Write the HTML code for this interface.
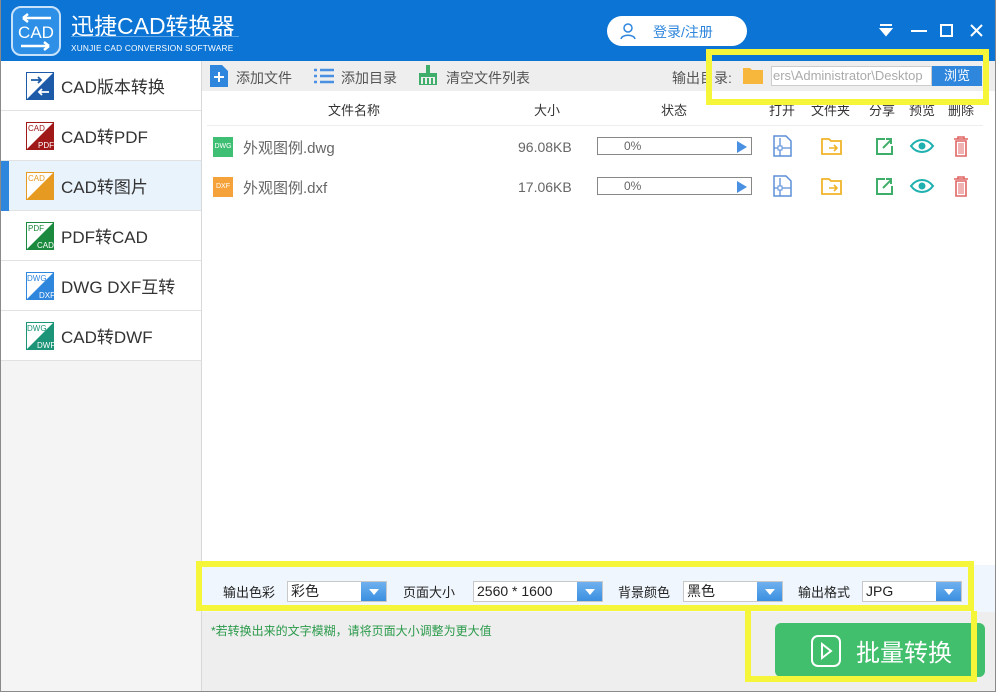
<!DOCTYPE html>
<html><head><meta charset="utf-8"><style>
*{margin:0;padding:0;box-sizing:border-box}
body{width:996px;height:692px;position:relative;overflow:hidden;background:#fff;font-family:"Liberation Sans","Noto Sans CJK SC",sans-serif;color:#333}
.a{position:absolute}
.title{left:0;top:0;width:996px;height:61px;background:#0b74d4}
.side{left:0;top:61px;width:202px;height:631px;background:#f4f4f4;border-right:1px solid #d8d8d8;border-left:1px solid #9a9a9a}
.item{position:absolute;left:1px;width:200px;height:50px;background:#fff;border-bottom:1px solid #e2e2e2;font-size:17px;color:#333}
.item span{position:absolute;left:60px;top:12px}
.item svg{position:absolute;left:25px;top:11px}
.tb{left:202px;top:61px;width:794px;height:30px;background:#eeeeee;font-size:14px;color:#555}
.hdr{font-size:13px;color:#333;top:100px}
.row{font-size:14px;color:#666}
.prog{width:155px;height:18px;border:1px solid #888;background:#fff;font-size:12px;color:#666}
.opt{left:202px;top:565px;width:794px;height:47px;background:#eff6fd}
.lbl{font-size:13px;color:#222;top:582px}
.sel{top:581px;height:21px;border:1px solid #c8c8c8;background:#fff;font-size:14px;color:#222;padding-left:3px;line-height:19px}
.sel i{position:absolute;right:0;top:0;width:25px;height:19px;background:linear-gradient(#6fb1ef,#3a8fe0)}
.sel i:after{content:"";position:absolute;left:8px;top:7px;border-left:5px solid transparent;border-right:5px solid transparent;border-top:6px solid #fff}
.yl{border:6px solid #f5f53a}
</style></head><body>
<div class="a title"></div>
<svg class="a" style="left:11px;top:6px" width="50" height="50" viewBox="0 0 50 50"><rect x="1" y="1" width="48" height="48" rx="9" fill="#2d8fe6" stroke="#c8e2fa" stroke-width="2"/><text x="25" y="32" font-size="17" fill="#fff" text-anchor="middle" font-family="Liberation Sans">CAD</text><path d="M12 12H40M12 12l5-4M12 12l5 4M10 40H38M38 40l-5-4M38 40l-5 4" stroke="#fff" stroke-width="2.5" fill="none"/></svg>
<div class="a" style="left:71px;top:7px;font-size:23px;color:#fff">迅捷CAD转换器</div>
<div class="a" style="left:71px;top:36px;width:168px;border-top:1px solid #5aa3e6"></div>
<div class="a" style="left:71px;top:43px;font-size:8.3px;color:#fff;letter-spacing:.2px">XUNJIE CAD CONVERSION SOFTWARE</div>
<div class="a" style="left:607px;top:16px;width:140px;height:30px;border-radius:15px;background:#fff"></div>
<svg class="a" style="left:619px;top:22px" width="18" height="18"><circle cx="9" cy="6" r="4" fill="none" stroke="#2f86dd" stroke-width="1.5"/><path d="M2 17c1-5 13-5 14 0" fill="none" stroke="#2f86dd" stroke-width="1.5"/></svg>
<div class="a" style="left:653px;top:22px;font-size:14px;color:#2f86dd">登录/注册</div>
<svg class="a" style="left:878px;top:22px" width="110" height="18"><path d="M2 3h12M3 7h10l-5 6z" fill="#fff" stroke="#fff" stroke-width="2"/><path d="M33 9h16" stroke="#fff" stroke-width="2"/><rect x="63" y="3" width="11" height="11" fill="none" stroke="#fff" stroke-width="2"/><path d="M93 3l11 11M104 3L93 14" stroke="#fff" stroke-width="2"/></svg>

<div class="a side"></div>
<div class="item" style="top:61px"><svg width="28" height="28"><rect x=".5" y=".5" width="27" height="27" fill="#fff" stroke="#1d5aa8"/><path d="M27 1L1 27H27z" fill="#1d5aa8"/><path d="M5 8h10M12 5l3 3-3 3" stroke="#1d5aa8" stroke-width="1.8" fill="none"/><path d="M23 20H13M16 17l-3 3 3 3" stroke="#fff" stroke-width="1.8" fill="none"/></svg><span>CAD版本转换</span></div>
<div class="item" style="top:111px"><svg width="28" height="28"><rect x=".5" y=".5" width="27" height="27" fill="#fff" stroke="#a01818"/><path d="M27 1L1 27H27z" fill="#a01818"/><text x="2" y="9" font-size="8" fill="#a01818">CAD</text><text x="12" y="26" font-size="8" fill="#fff">PDF</text></svg><span>CAD转PDF</span></div>
<div class="item" style="top:161px;background:#e9f3fc"><div class="a" style="left:0;top:0;width:8px;height:50px;background:#2f86dd"></div><svg width="28" height="28"><rect x=".5" y=".5" width="27" height="27" fill="#fff" stroke="#e69a22"/><path d="M27 1L1 27H27z" fill="#e69a22"/><text x="2" y="9" font-size="8" fill="#e69a22">CAD</text></svg><span>CAD转图片</span></div>
<div class="item" style="top:211px"><svg width="28" height="28"><rect x=".5" y=".5" width="27" height="27" fill="#fff" stroke="#1b8a3e"/><path d="M27 1L1 27H27z" fill="#1b8a3e"/><text x="2" y="9" font-size="8" fill="#1b8a3e">PDF</text><text x="11" y="26" font-size="8" fill="#fff">CAD</text></svg><span>PDF转CAD</span></div>
<div class="item" style="top:261px"><svg width="28" height="28"><rect x=".5" y=".5" width="27" height="27" fill="#fff" stroke="#2f86dd"/><path d="M27 1L1 27H27z" fill="#2f86dd"/><text x="1" y="9" font-size="8" fill="#2f86dd">DWG</text><text x="13" y="26" font-size="8" fill="#fff">DXF</text></svg><span>DWG DXF互转</span></div>
<div class="item" style="top:311px"><svg width="28" height="28"><rect x=".5" y=".5" width="27" height="27" fill="#fff" stroke="#1c9478"/><path d="M27 1L1 27H27z" fill="#1c9478"/><text x="1" y="9" font-size="8" fill="#1c9478">DWG</text><text x="11" y="26" font-size="8" fill="#fff">DWF</text></svg><span>CAD转DWF</span></div>

<div class="a tb"></div>
<svg class="a" style="left:210px;top:65px" width="18" height="22"><path d="M0 0h12l6 6v16H0z" fill="#2f86dd"/><path d="M9 7v10M4 12h10" stroke="#fff" stroke-width="2"/></svg>
<div class="a" style="left:236px;top:68px;font-size:14px;color:#555">添加文件</div>
<svg class="a" style="left:314px;top:68px" width="20" height="16"><path d="M0 2h3M6 2h14M0 8h3M6 8h14M0 14h3M6 14h14" stroke="#4a90e2" stroke-width="2.5"/></svg>
<div class="a" style="left:341px;top:68px;font-size:14px;color:#555">添加目录</div>
<svg class="a" style="left:419px;top:65px" width="18" height="20"><rect x="7" y="0" width="4" height="8" fill="#3fae6a"/><rect x="0" y="8" width="18" height="4" fill="#3fae6a"/><path d="M1 12v8h16v-8M5 13v6M9 13v6M13 13v6" stroke="#3fae6a" stroke-width="2" fill="none"/></svg>
<div class="a" style="left:446px;top:68px;font-size:14px;color:#555">清空文件列表</div>
<div class="a" style="left:672px;top:68px;font-size:14px;color:#555">输出目录:</div>
<svg class="a" style="left:743px;top:66px" width="20" height="18"><path d="M0 2h7l2 2h11v14H0z" fill="#f6b73c"/></svg>
<div class="a" style="left:771px;top:66px;width:161px;height:20px;border:1px solid #ccc;background:#fff;font-size:13px;color:#aaa;padding-left:1px;line-height:18px;overflow:hidden;white-space:nowrap">ers\Administrator\Desktop</div>
<div class="a" style="left:932px;top:66px;width:50px;height:20px;background:#2f86dd;color:#fff;font-size:13px;text-align:center;line-height:20px">浏览</div>

<div class="a hdr" style="left:328px">文件名称</div>
<div class="a hdr" style="left:534px">大小</div>
<div class="a hdr" style="left:661px">状态</div>
<div class="a hdr" style="left:769px">打开</div>
<div class="a hdr" style="left:811px">文件夹</div>
<div class="a hdr" style="left:869px">分享</div>
<div class="a hdr" style="left:909px">预览</div>
<div class="a hdr" style="left:948px">删除</div>
<div class="a" style="left:207px;top:125px;width:776px;border-top:1px solid #eee"></div>

<div class="a" style="left:213px;top:137px;width:20px;height:20px;background:#3fbf73;color:#fff;font-size:7px;text-align:center;line-height:20px">DWG</div>
<div class="a row" style="left:243px;top:137px;font-size:15px">外观图例.dwg</div>
<div class="a row" style="left:518px;top:139px">96.08KB</div>
<div class="a" style="left:213px;top:177px;width:20px;height:20px;background:#f6a23a;color:#fff;font-size:7px;text-align:center;line-height:20px">DXF</div>
<div class="a row" style="left:243px;top:177px;font-size:15px">外观图例.dxf</div>
<div class="a row" style="left:518px;top:179px">17.06KB</div>
<div class="a prog" style="left:597px;top:137px"><span class="a" style="left:26px;top:1px">0%</span><span class="a" style="right:4px;top:3px;border-top:6px solid transparent;border-bottom:6px solid transparent;border-left:10px solid #4a90e2"></span></div>
<div class="a prog" style="left:597px;top:177px"><span class="a" style="left:26px;top:1px">0%</span><span class="a" style="right:4px;top:3px;border-top:6px solid transparent;border-bottom:6px solid transparent;border-left:10px solid #4a90e2"></span></div>

<svg class="a" style="left:772px;top:135px" width="200" height="62">
<g id="r"><path d="M2 1h12l5 5v15H2z" fill="none" stroke="#5b8fd8" stroke-width="1.5"/><path d="M2 13h4M10 13h9M8 3v8M8 15v6" stroke="#5b8fd8" stroke-width="1.3"/><rect x="6" y="11" width="4" height="4" fill="none" stroke="#5b8fd8"/>
<path d="M50 4h7l2 2h10v13H50z" fill="none" stroke="#f0b429" stroke-width="1.8"/><path d="M57 13h8M62 10l3 3-3 3" stroke="#f0b429" stroke-width="1.6" fill="none"/>
<path d="M113 4h-8v15h15v-8" fill="none" stroke="#3fae6a" stroke-width="2"/><path d="M111 13l8-8M114 4h5v5" stroke="#3fae6a" stroke-width="2" fill="none"/>
<path d="M139 11c6-8 16-8 22 0c-6 8-16 8-22 0z" fill="none" stroke="#1fb0b0" stroke-width="2"/><circle cx="150" cy="11" r="3.5" fill="#1fb0b0"/>
<path d="M182 4h14M186 4V2h6v2M184 6h10v15h-10z" fill="none" stroke="#e06565" stroke-width="1.6"/><path d="M187 8v11M189 8v11M191 8v11" stroke="#e06565"/></g>
<use href="#r" y="40"/></svg>

<div class="a opt"></div>
<div class="a" style="left:202px;top:612px;width:794px;height:80px;background:#eeeeee"></div>
<div class="a lbl" style="left:223px">输出色彩</div>
<div class="a sel" style="left:287px;width:100px">彩色<i></i></div>
<div class="a lbl" style="left:403px">页面大小</div>
<div class="a sel" style="left:473px;width:130px">2560 * 1600<i></i></div>
<div class="a lbl" style="left:618px">背景颜色</div>
<div class="a sel" style="left:683px;width:100px">黑色<i></i></div>
<div class="a lbl" style="left:798px">输出格式</div>
<div class="a sel" style="left:862px;width:100px">JPG<i></i></div>
<div class="a" style="left:211px;top:622px;font-size:12px;color:#2a9a4a">*若转换出来的文字模糊，请将页面大小调整为更大值</div>
<div class="a" style="left:775px;top:623px;width:210px;height:54px;border-radius:6px;background:#41bf6d"></div>
<svg class="a" style="left:811px;top:635px" width="30" height="32"><rect x="1" y="1" width="28" height="30" rx="6" fill="none" stroke="#fff" stroke-width="2"/><path d="M11 9l9 7-9 7z" fill="none" stroke="#fff" stroke-width="2"/></svg>
<div class="a" style="left:856px;top:633px;font-size:24px;color:#fff">批量转换</div>

<div class="a yl" style="left:706px;top:49px;width:283px;height:56px"></div>
<div class="a yl" style="left:196px;top:561px;width:778px;height:50px"></div>
<div class="a yl" style="left:745px;top:611px;width:232px;height:71px;border-top:none"></div>
<div class="a" style="left:0;top:0;width:996px;height:692px;border:1px solid #8a8a8a;border-top:none"></div>
</body></html>
